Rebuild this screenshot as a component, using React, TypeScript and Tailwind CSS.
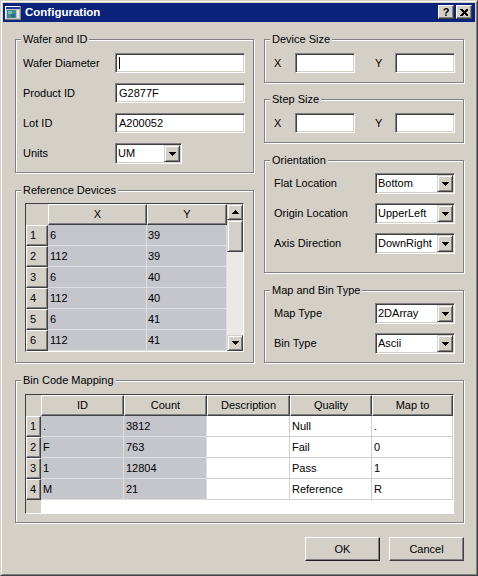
import React from "react";

const sunken =
  "border border-t-[#808080] border-l-[#808080] border-b-white border-r-white shadow-[inset_1px_1px_0_#404040,inset_-1px_-1px_0_#d4d0c8]";
const raised =
  "border border-t-[#d4d0c8] border-l-[#d4d0c8] border-b-[#404040] border-r-[#404040] shadow-[inset_1px_1px_0_#ffffff,inset_-1px_-1px_0_#808080]";
const hdr =
  "border border-t-white border-l-white border-b-[#404040] border-r-[#404040] shadow-[inset_-1px_-1px_0_#808080] bg-[#d4d0c8]";

function TriDown() {
  return (
    <svg width="7" height="4" viewBox="0 0 7 4" shapeRendering="crispEdges">
      <rect x="0" y="0" width="7" height="1" fill="#000" />
      <rect x="1" y="1" width="5" height="1" fill="#000" />
      <rect x="2" y="2" width="3" height="1" fill="#000" />
      <rect x="3" y="3" width="1" height="1" fill="#000" />
    </svg>
  );
}
function TriUp() {
  return (
    <svg width="7" height="4" viewBox="0 0 7 4" shapeRendering="crispEdges">
      <rect x="3" y="0" width="1" height="1" fill="#000" />
      <rect x="2" y="1" width="3" height="1" fill="#000" />
      <rect x="1" y="2" width="5" height="1" fill="#000" />
      <rect x="0" y="3" width="7" height="1" fill="#000" />
    </svg>
  );
}

function Group({
  title,
  className,
  children,
}: {
  title: string;
  className: string;
  children?: React.ReactNode;
}) {
  return (
    <div
      className={`border border-[#808080] shadow-[inset_1px_1px_0_#ffffff,1px_1px_0_#ffffff] ${className}`}
    >
      <div className="-mt-[8px] ml-[5px] w-fit bg-[#d4d0c8] px-[2px] h-[14px] leading-[14px]">
        {title}
      </div>
      {children}
    </div>
  );
}

function TextBox({
  className,
  value,
  caret,
}: {
  className: string;
  value?: string;
  caret?: boolean;
}) {
  return (
    <div className={`${sunken} bg-white h-[20px] flex items-center pl-[3px] ${className}`}>
      {caret ? <div className="w-[1px] h-[12px] bg-black" /> : value}
    </div>
  );
}

function Combo({ className, value }: { className: string; value: string }) {
  return (
    <div className={`${sunken} bg-white h-[21px] flex items-stretch p-[1px] ${className}`}>
      <div className="flex-1 flex items-center pl-[1px]">{value}</div>
      <div className={`${raised} w-[16px] bg-[#d4d0c8] flex items-center justify-center`}>
        <TriDown />
      </div>
    </div>
  );
}

function Row({ label, lw, children }: { label: string; lw: string; children: React.ReactNode }) {
  return (
    <div className="flex items-center">
      <div className={`${lw} shrink-0`}>{label}</div>
      {children}
    </div>
  );
}

const refRows = [
  ["1", "6", "39"],
  ["2", "112", "39"],
  ["3", "6", "40"],
  ["4", "112", "40"],
  ["5", "6", "41"],
  ["6", "112", "41"],
];

const binRows = [
  ["1", ".", "3812", "", "Null", "."],
  ["2", "F", "763", "", "Fail", "0"],
  ["3", "1", "12804", "", "Pass", "1"],
  ["4", "M", "21", "", "Reference", "R"],
];

function RefGrid() {
  return (
    <div className="w-[219px] h-[149px] border border-t-[#404040] border-l-[#404040] border-b-white border-r-white flex overflow-hidden">
      <div className="w-[201px] flex flex-col">
        <div className="flex h-[21px] shrink-0">
          <div className="w-[22px] bg-[#d4d0c8]" />
          <div className={`${hdr} w-[99px] flex items-center justify-center`}>X</div>
          <div className={`${hdr} w-[80px] flex items-center justify-center`}>Y</div>
        </div>
        {refRows.map((r) => (
          <div key={r[0]} className="flex h-[21px] shrink-0">
            <div className={`${hdr} w-[22px] flex items-center pl-[3px]`}>{r[0]}</div>
            <div className="w-[99px] bg-[#c5c5cc] border-r border-b border-[#dedde0] flex items-center pl-[2px]">
              {r[1]}
            </div>
            <div className="w-[80px] bg-[#c5c5cc] border-r border-b border-[#dedde0] flex items-center pl-[1px]">
              {r[2]}
            </div>
          </div>
        ))}
      </div>
      <div className="w-[16px] flex flex-col">
        <div className={`${raised} h-[16px] bg-[#d4d0c8] flex items-center justify-center shrink-0`}>
          <TriUp />
        </div>
        <div className={`${raised} h-[32px] bg-[#d4d0c8] shrink-0`} />
        <div className="flex-1 bg-[#ebe9e5]" />
        <div className={`${raised} h-[16px] bg-[#d4d0c8] flex items-center justify-center shrink-0`}>
          <TriDown />
        </div>
      </div>
    </div>
  );
}

function BinGrid() {
  const widths = ["w-[83px]", "w-[83px]", "w-[83px]", "w-[82px]", "w-[81px]"];
  const heads = ["ID", "Count", "Description", "Quality", "Map to"];
  return (
    <div className="w-[429px] h-[120px] border border-t-[#404040] border-l-[#404040] border-b-white border-r-white flex flex-col overflow-hidden">
      <div className="flex h-[21px] shrink-0">
        <div className="w-[15px] bg-[#d4d0c8]" />
        {heads.map((h, i) => (
          <div key={h} className={`${hdr} ${widths[i]} flex items-center justify-center`}>
            {h}
          </div>
        ))}
      </div>
      {binRows.map((r) => (
        <div key={r[0]} className="flex h-[21px] shrink-0">
          <div className={`${hdr} w-[15px] flex items-center pl-[3px]`}>{r[0]}</div>
          {r.slice(1).map((c, i) => (
            <div
              key={i}
              className={`${widths[i]} border-r border-b flex items-center pl-[2px] ${
                i < 2 ? "bg-[#c5c5cc] border-[#dedde0]" : "bg-white border-[#d0d0d0]"
              }`}
            >
              {c}
            </div>
          ))}
        </div>
      ))}
      <div className="flex flex-1">
        <div className="w-[15px] bg-[#d4d0c8]" />
        <div className="flex-1 bg-white" />
      </div>
    </div>
  );
}

function AppIcon() {
  return (
    <svg width="16" height="16" viewBox="0 0 16 16" shapeRendering="crispEdges">
      <rect x="0" y="1" width="16" height="14" fill="#808080" />
      <rect x="0" y="1" width="15" height="13" fill="#ffffff" />
      <rect x="1" y="2" width="14" height="12" fill="#c0c0c0" />
      <rect x="1" y="2" width="14" height="2" fill="#1c3c9c" />
      <rect x="2" y="5" width="9" height="8" fill="#3e8f8a" />
      <rect x="3" y="6" width="4" height="3" fill="#7cc0b0" />
      <rect x="6" y="9" width="4" height="3" fill="#2a6a9a" />
      <rect x="12" y="5" width="2" height="8" fill="#e8e8e8" />
    </svg>
  );
}

function CapButton({ children }: { children: React.ReactNode }) {
  return (
    <div
      className={`border border-t-white border-l-white border-b-[#404040] border-r-[#404040] shadow-[inset_-1px_-1px_0_#808080] bg-[#d4d0c8] w-[16px] h-[14px] flex items-center justify-center`}
    >
      {children}
    </div>
  );
}

function PushButton({ label, dark }: { label: string; dark?: boolean }) {
  return (
    <div
      className={`border border-t-white border-l-white ${
        dark ? "border-b-[#202020] border-r-[#202020]" : "border-b-[#404040] border-r-[#404040]"
      } shadow-[inset_-1px_-1px_0_#808080] bg-[#d4d0c8] w-[75px] h-[24px] flex items-center justify-center`}
    >
      {label}
    </div>
  );
}

export default function App() {
  return (
    <div className="w-[478px] h-[576px] border border-t-[#d4d0c8] border-l-[#d4d0c8] border-b-[#404040] border-r-[#404040] bg-[#d4d0c8] text-black text-[11px] leading-[13px] font-['Liberation_Sans',Arial,sans-serif]">
      <div className="h-full border border-t-white border-l-white border-b-[#808080] border-r-[#808080] p-[1px] flex flex-col">
        {/* Title bar */}
        <div className="h-[19px] shrink-0 bg-[#0b237a] flex items-start pl-[2px] pr-[3px]">
          <div className="mt-[2px]">
            <AppIcon />
          </div>
          <div className="ml-[4px] self-center text-white font-bold text-[11.5px]">Configuration</div>
          <div className="flex-1" />
          <div className="mt-[2px] flex gap-[2px]">
            <CapButton>
              <span className="font-bold text-[11px] leading-[11px]">?</span>
            </CapButton>
            <CapButton>
              <svg width="8" height="7" viewBox="0 0 8 7" shapeRendering="crispEdges">
                <path d="M0 0h2l2 2 2-2h2v1l-2.5 2.5L8 6v1H6L4 5 2 7H0V6l2.5-2.5L0 1z" fill="#000" />
              </svg>
            </CapButton>
          </div>
        </div>

        {/* Body */}
        <div className="flex flex-col pt-[17px] pl-[12px]">
          <div className="flex gap-[10px]">
            <div className="flex flex-col w-[239px]">
              <Group title="Wafer and ID" className="h-[134px]">
                <div className="flex flex-col gap-[10px] pt-[7px] pl-[7px]">
                  <Row label="Wafer Diameter" lw="w-[92px]">
                    <TextBox className="w-[130px]" caret />
                  </Row>
                  <Row label="Product ID" lw="w-[92px]">
                    <TextBox className="w-[130px]" value="G2877F" />
                  </Row>
                  <Row label="Lot ID" lw="w-[92px]">
                    <TextBox className="w-[130px]" value="A200052" />
                  </Row>
                  <Row label="Units" lw="w-[92px]">
                    <Combo className="w-[67px]" value="UM" />
                  </Row>
                </div>
              </Group>
              <Group title="Reference Devices" className="h-[173px] mt-[17px]">
                <div className="pt-[6px] pl-[9px]">
                  <RefGrid />
                </div>
              </Group>
            </div>

            <div className="flex flex-col w-[200px]">
              <Group title="Device Size" className="h-[44px]">
                <div className="flex items-center pt-[7px] pl-[9px]">
                  <div className="w-[21px]">X</div>
                  <TextBox className="w-[60px]" />
                  <div className="w-[20px] ml-[20px]">Y</div>
                  <TextBox className="w-[60px]" />
                </div>
              </Group>
              <Group title="Step Size" className="h-[44px] mt-[16px]">
                <div className="flex items-center pt-[7px] pl-[9px]">
                  <div className="w-[21px]">X</div>
                  <TextBox className="w-[60px]" />
                  <div className="w-[20px] ml-[20px]">Y</div>
                  <TextBox className="w-[60px]" />
                </div>
              </Group>
              <Group title="Orientation" className="h-[113px] mt-[17px]">
                <div className="flex flex-col gap-[9px] pt-[6px] pl-[9px]">
                  <Row label="Flat Location" lw="w-[101px]">
                    <Combo className="w-[80px]" value="Bottom" />
                  </Row>
                  <Row label="Origin Location" lw="w-[101px]">
                    <Combo className="w-[80px]" value="UpperLeft" />
                  </Row>
                  <Row label="Axis Direction" lw="w-[101px]">
                    <Combo className="w-[80px]" value="DownRight" />
                  </Row>
                </div>
              </Group>
              <Group title="Map and Bin Type" className="h-[73px] mt-[17px]">
                <div className="flex flex-col gap-[9px] pt-[6px] pl-[9px]">
                  <Row label="Map Type" lw="w-[101px]">
                    <Combo className="w-[80px]" value="2DArray" />
                  </Row>
                  <Row label="Bin Type" lw="w-[101px]">
                    <Combo className="w-[80px]" value="Ascii" />
                  </Row>
                </div>
              </Group>
            </div>
          </div>

          <Group title="Bin Code Mapping" className="w-[449px] h-[143px] mt-[17px]">
            <div className="pt-[7px] pl-[9px]">
              <BinGrid />
            </div>
          </Group>

          <div className="w-[449px] flex justify-end gap-[9px] mt-[14px]">
            <PushButton label="OK" dark />
            <PushButton label="Cancel" />
          </div>
        </div>
      </div>
    </div>
  );
}
